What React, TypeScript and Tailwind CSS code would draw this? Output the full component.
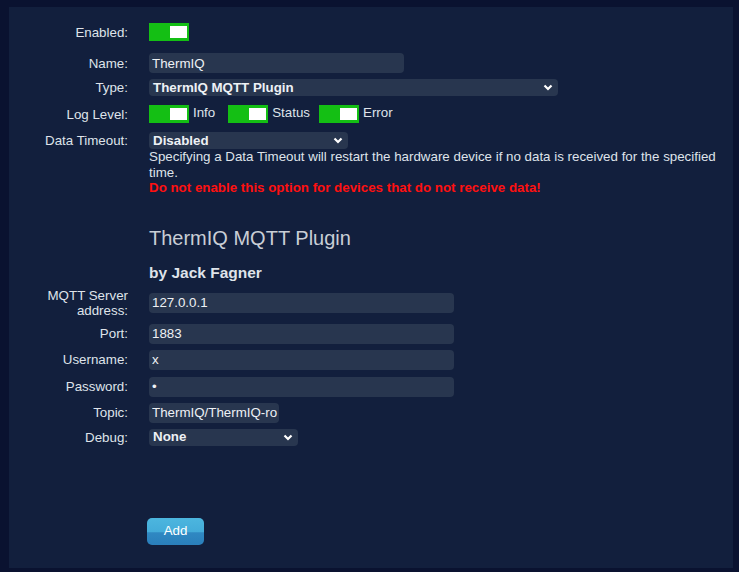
import { ReactNode } from 'react';

const Toggle = () => (
  <div className="relative w-[40px] h-[18px] bg-[#14bf14] shrink-0">
    <div className="absolute right-[2px] top-[3px] w-[17px] h-[12px] bg-white" />
  </div>
);

const Chevron = () => (
  <svg width="10" height="7" viewBox="0 0 10 7" className="shrink-0">
    <polyline points="1.5,1.5 5,5 8.5,1.5" fill="none" stroke="#ffffff" strokeWidth="2.2" />
  </svg>
);

const Select = ({ value, width }: { value: string; width: string }) => (
  <div className={`${width} h-[17px] bg-[#28364f] rounded-[4px] flex items-center justify-between pl-[4px] pr-[5px] font-bold text-[#eef1f5]`}>
    <span>{value}</span>
    <Chevron />
  </div>
);

const Input = ({ value, width, type = 'text' }: { value: string; width: string; type?: string }) => (
  <input
    type={type}
    defaultValue={value}
    readOnly
    className={`${width} h-[20px] bg-[#28364f] rounded-[4px] pl-[3px] text-[13.33px] text-[#eef1f5] outline-none`}
  />
);

const Row = ({ label, children, className = '' }: { label: ReactNode; children: ReactNode; className?: string }) => (
  <div className={`flex items-center ${className}`}>
    <div className="w-[119px] text-right leading-[15px] shrink-0">{label}</div>
    <div className="ml-[21px] flex items-center">{children}</div>
  </div>
);

export default function App() {
  return (
    <div className="w-[739px] h-[572px] bg-[#0a1230] pt-[7px] pl-[9px] font-['Liberation_Sans',Arial,sans-serif] text-[13.33px] text-[#dfe3ea]">
      <div className="w-[724px] h-[561px] bg-[#121f3d] pt-[16px]">
        <Row label="Enabled:">
          <Toggle />
        </Row>
        <Row label="Name:" className="mt-[12px]">
          <Input value="ThermIQ" width="w-[255px]" />
        </Row>
        <Row label="Type:" className="mt-[6px]">
          <Select value="ThermIQ MQTT Plugin" width="w-[409px]" />
        </Row>
        <Row label="Log Level:" className="mt-[9px]">
          <Toggle />
          <span className="ml-[4px] -mt-[2px]">Info</span>
          <div className="ml-[13px]"><Toggle /></div>
          <span className="ml-[4px] -mt-[2px]">Status</span>
          <div className="ml-[9px]"><Toggle /></div>
          <span className="ml-[4px] -mt-[2px]">Error</span>
        </Row>
        <div className="flex mt-[9px]">
          <div className="w-[119px] text-right leading-[15px] shrink-0 pt-[1px]">Data Timeout:</div>
          <div className="ml-[21px] flex-1 pr-[8px]">
            <Select value="Disabled" width="w-[199px]" />
            <p className="leading-[15.5px]">
              Specifying a Data Timeout will restart the hardware device if no data is received for the specified time.
            </p>
            <p className="leading-[15.5px] font-bold text-[#ff1010]">
              Do not enable this option for devices that do not receive data!
            </p>
          </div>
        </div>

        <div className="ml-[140px] mt-[30px]">
          <h2 className="text-[20px] leading-[24px] text-[#c9ced6]">ThermIQ MQTT Plugin</h2>
          <h3 className="mt-[13px] text-[15.5px] leading-[20px] font-bold text-[#dfe3ea]">by Jack Fagner</h3>
        </div>

        <Row label={<>MQTT Server<br />address:</>} className="mt-[5px]">
          <Input value="127.0.0.1" width="w-[305px]" />
        </Row>
        <Row label="Port:" className="mt-[6px]">
          <Input value="1883" width="w-[305px]" />
        </Row>
        <Row label="Username:" className="mt-[6px]">
          <Input value="x" width="w-[305px]" />
        </Row>
        <Row label="Password:" className="mt-[7px]">
          <Input value="x" type="password" width="w-[305px]" />
        </Row>
        <Row label="Topic:" className="mt-[6px]">
          <Input value="ThermIQ/ThermIQ-ro" width="w-[130px]" />
        </Row>
        <Row label="Debug:" className="mt-[6px]">
          <Select value="None" width="w-[149px]" />
        </Row>

        <div className="ml-[138px] mt-[72px]">
          <button className="w-[57px] h-[27px] rounded-[5px] bg-[linear-gradient(to_bottom,#4cb6df_0%,#44acd9_50%,#2f88c2_55%,#2a7fbb_100%)] text-white text-[13.33px]">
            Add
          </button>
        </div>
      </div>
    </div>
  );
}
